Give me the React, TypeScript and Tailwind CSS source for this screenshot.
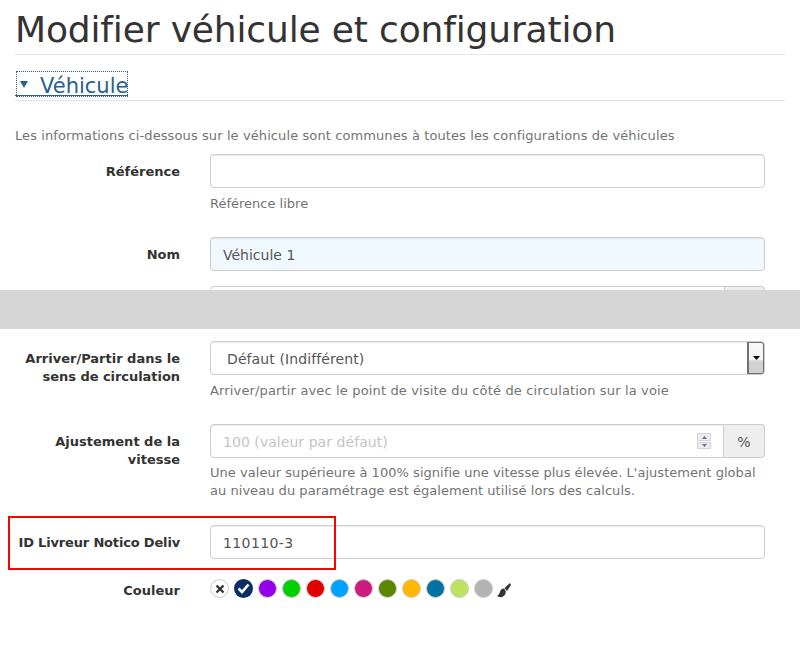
import React from "react";

const colors = ["#9400e8","#00d000","#e00000","#00a2ff","#cc1a80","#5a8600","#ffb900","#0073a3","#bde25f","#b3b3b3"];

function Row({ label, className = "", children }: { label: React.ReactNode; className?: string; children: React.ReactNode }) {
  return (
    <div className={"flex px-[15px] " + className}>
      <div className="w-[165px] shrink-0 whitespace-nowrap pt-[9px] text-right text-[13px] leading-[18px] font-bold text-[#333333]">{label}</div>
      <div className="ml-[30px] w-[555px] shrink-0">{children}</div>
    </div>
  );
}

const inputCls = "block w-full h-[34px] rounded-[4px] border border-[#cccccc] px-[12px] pt-[2px] text-[14px] text-[#555555] outline-none shadow-[inset_0_1px_1px_rgba(0,0,0,0.075)]";

export default function App() {
  return (
    <div className="h-[650px] w-[800px] overflow-hidden bg-white font-['DejaVu_Sans',sans-serif] text-[#333333]">
      <div className="mx-[15px] h-[55px] border-b border-[#e5e5e5]">
        <h1 className="pt-[10px] text-[36px] leading-[40px] tracking-[-0.15px] text-[#333333]">Modifier véhicule et configuration</h1>
      </div>
      <div className="mx-[15px] h-[46px] border-b border-[#e5e5e5] pt-[16px]">
        <a className="ml-[1px] block h-[26px] w-[112px] text-[#286090] outline-1 -outline-offset-1 outline-dotted outline-[#286090]">
          <span className="-ml-[1px] flex h-[25px] items-center whitespace-nowrap border-b border-[#286090] pt-[5px] text-[21px] leading-[24px]">
            <svg width="8" height="7" viewBox="0 0 8 7" className="ml-[5px] mr-[12px] -mt-[2px] shrink-0"><path d="M0 0h8L4 7z" fill="#286090"/></svg>
            Véhicule
          </span>
        </a>
      </div>
      <p className="mx-[15px] mt-[26px] text-[13px] leading-[18px] tracking-[0.1px] text-[#737373]">Les informations ci-dessous sur le véhicule sont communes à toutes les configurations de véhicules</p>

      <Row label="Référence" className="mt-[9px]">
        <input className={inputCls} />
        <p className="mt-[7px] text-[13px] leading-[18px] text-[#737373]">Référence libre</p>
      </Row>
      <Row label="Nom" className="mt-[24px]">
        <input className={inputCls + " bg-[#f0f9ff]"} defaultValue="Véhicule 1" />
      </Row>
      <div className="mt-[15px] ml-[210px] flex h-[4px] w-[555px] overflow-hidden">
        <div className="h-[34px] grow rounded-l-[4px] border border-[#cccccc]" />
        <div className="h-[34px] w-[40px] rounded-r-[4px] border border-l-0 border-[#cccccc] bg-[#eeeeee]" />
      </div>
      <div className="h-[39px] bg-[#d6d6d6]" />

      <Row label={<><span>Arriver/Partir dans le</span><br /><span className="tracking-[-0.05px]">sens de circulation</span></>} className="mt-[12px]">
        <div className="flex h-[34px] rounded-[4px] border border-[#cccccc] shadow-[inset_0_1px_1px_rgba(0,0,0,0.075)]">
          <span className="grow pl-[16px] text-[14px] leading-[34px] tracking-[0.1px] text-[#555555]">Défaut (Indifférent)</span>
          <div className="flex w-[17px] items-center justify-center rounded-r-[3px] border border-l-2 border-[#707070] bg-[linear-gradient(#f8f8f8_0%,#f4f4f4_55%,#d2d2d2_60%,#d2d2d2_100%)]">
            <svg width="7" height="4" viewBox="0 0 7 4"><path d="M0 0h7L3.5 4z" fill="#000"/></svg>
          </div>
        </div>
        <p className="mt-[7px] text-[13px] leading-[18px] tracking-[0.15px] text-[#737373]">Arriver/partir avec le point de visite du côté de circulation sur la voie</p>
      </Row>

      <Row label={<>Ajustement de la<br />vitesse</>} className="mt-[24px]">
        <div className="flex h-[34px]">
          <div className="flex grow items-center rounded-l-[4px] border border-[#cccccc] pl-[12px] pr-[12px] shadow-[inset_0_1px_1px_rgba(0,0,0,0.075)]">
            <span className="grow pt-[2px] text-[14px] tracking-[0.05px] text-[#c4c4c4]">100 (valeur par défaut)</span>
            <div className="flex h-[16px] w-[14px] flex-col gap-[1px]">
              <div className="flex h-[8px] items-center justify-center border border-[#d4d4d4] bg-[#ececec]">
                <svg width="5" height="3" viewBox="0 0 5 3"><path d="M2.5 0L5 3H0z" fill="#5a6fa8"/></svg>
              </div>
              <div className="flex h-[7px] items-center justify-center border border-[#d4d4d4] bg-[#ececec]">
                <svg width="5" height="3" viewBox="0 0 5 3"><path d="M0 0h5L2.5 3z" fill="#5a6fa8"/></svg>
              </div>
            </div>
          </div>
          <div className="flex w-[41px] items-center justify-center rounded-r-[4px] border border-l-0 border-[#cccccc] bg-[#eeeeee] pt-[2px] text-[14px] text-[#555555]">%</div>
        </div>
        <p className="mt-[6px] text-[13px] leading-[18px] tracking-[0.04px] text-[#737373]">Une valeur supérieure à 100% signifie une vitesse plus élevée. L'ajustement global<br />au niveau du paramétrage est également utilisé lors des calculs.</p>
      </Row>

      <div className="relative">
        <Row label={<span className="tracking-[-0.17px]">ID Livreur Notico Deliv</span>} className="mt-[25px]">
          <input className={inputCls + " tracking-[0.4px]"} defaultValue="110110-3" />
        </Row>
        <div className="absolute top-[-9px] left-[8px] h-[54px] w-[328px] border-2 border-[#ff0000]" />
      </div>

      <Row label="Couleur" className="mt-[14px]">
        <div className="flex items-center gap-[5px] pt-[6px]">
          <span className="flex h-[19px] w-[19px] items-center justify-center rounded-full border border-[#cccccc] bg-white">
            <svg width="10" height="10" viewBox="0 0 10 10"><path d="M1.5 1.5l7 7M8.500 1.500l-7 7" stroke="#333" strokeWidth="2.4"/></svg>
          </span>
          <span className="flex h-[19px] w-[19px] items-center justify-center rounded-full bg-[#0a2e64]">
            <svg width="13" height="11" viewBox="0 0 13 11"><path d="M1.500 5.500l3.500 3.500 6.500-7.500" stroke="#fff" strokeWidth="2.6" fill="none"/></svg>
          </span>
          {colors.map((c) => (
            <span key={c} className="h-[19px] w-[19px] rounded-full border border-[#cccccc]" style={{ backgroundColor: c }} />
          ))}
          <svg width="14" height="15" viewBox="0 0 14 15" className="mt-[3px] -ml-[1px]">
            <path d="M13 0L7.500 5 10 8 14 2z" fill="#333"/>
            <path d="M7 5.500c-2.500 0-3.500 1.500-4 3.500C2.500 10.500 1.500 12 0 13c2.500 2 7 1.500 8.500-2.500C9 9 9 7.500 7 5.500z" fill="#333"/>
          </svg>
        </div>
      </Row>
    </div>
  );
}
